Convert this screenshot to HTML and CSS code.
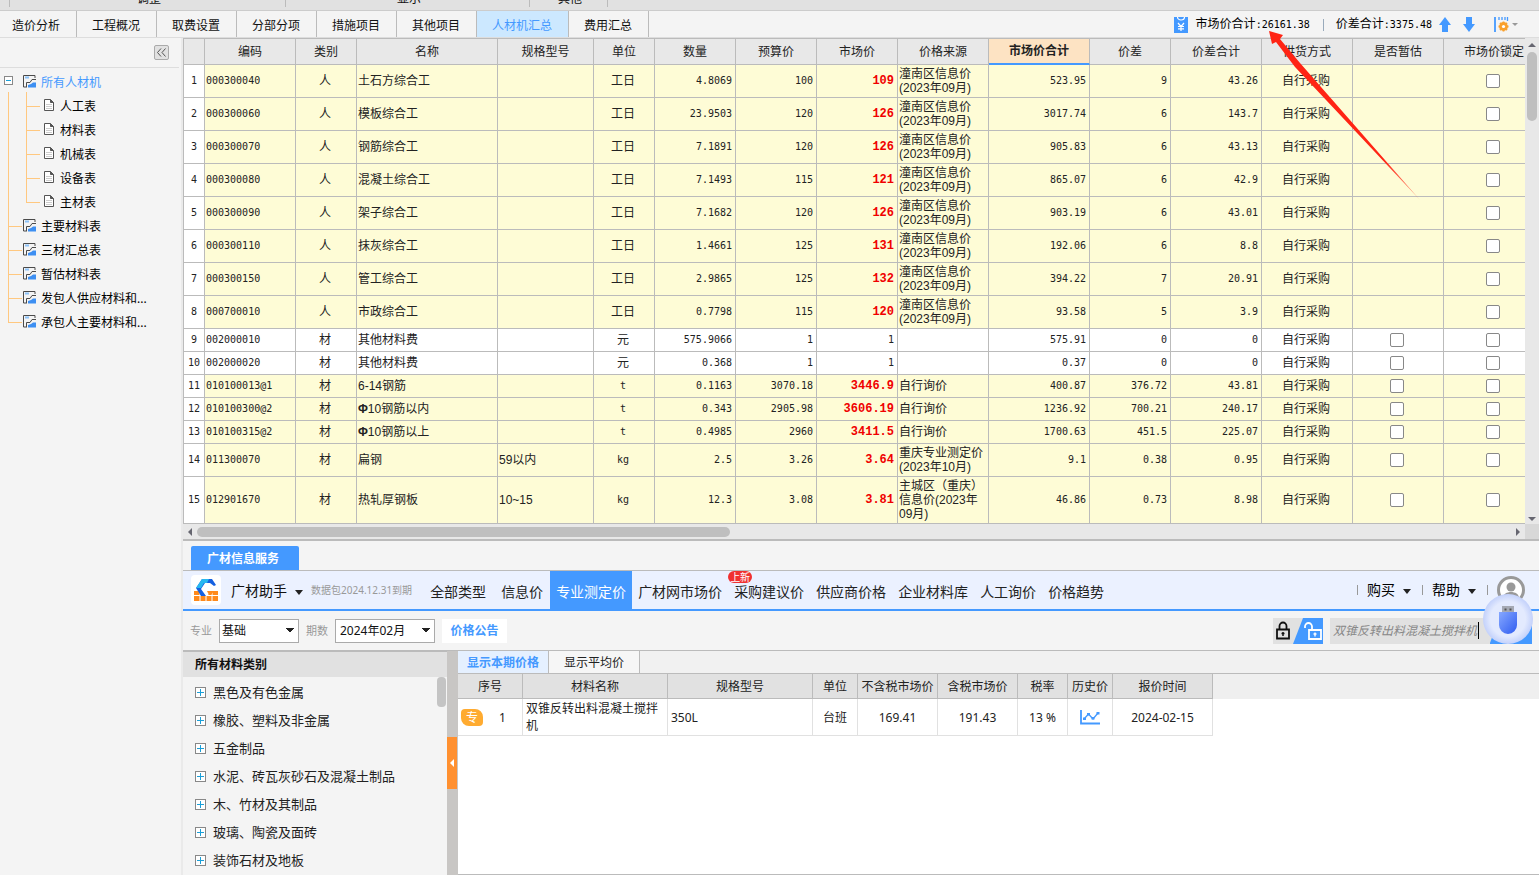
FILE: index.html
```html
<!DOCTYPE html>
<html lang="zh-CN">
<head>
    <meta charset="UTF-8">
    <meta name="viewport" content="width=device-width, initial-scale=1.0">
    <title>人材机汇总</title>
    <link rel="stylesheet" href="styles.css">
</head>
<body>
    <svg class="sprite" aria-hidden="true">
        <symbol id="ico-sheet" viewBox="0 0 13 13">
            <path d="M12 3V.5H.5v11.500H4" fill="none" stroke="#4a4a4a"/>
            <path d="M2 2.500h4" stroke="#8cc2f8" stroke-width="2"/>
            <path d="M3.500 12V7.500H7l2-3h4" fill="none" stroke="#4a4a4a"/>
            <path d="M5 12.500V10l3-1 2-1.500h3v5z" fill="#3d8ff2"/>
        </symbol>
        <symbol id="ico-page" viewBox="0 0 10 12">
            <path d="M.5.5h6l3 3v8h-9z" fill="#fff" stroke="#555"/>
            <path d="M6.500.5v3h3" fill="#555" stroke="#555"/>
            <path d="M2 5.500h6M2 7.500h6M2 9.500h6" stroke="#ccc"/>
        </symbol>
    </svg>

    <div class="ribbon">
        <span class="group group-start"></span>
        <span class="group group-adjust">调整</span>
        <span class="group group-show">显示</span>
        <span class="group group-other">其他</span>
    </div>

    <div class="topbar">
        <nav class="tabs">
            <a href="#">造价分析</a>
            <a href="#">工程概况</a>
            <a href="#">取费设置</a>
            <a href="#">分部分项</a>
            <a href="#">措施项目</a>
            <a href="#">其他项目</a>
            <a href="#" class="active">人材机汇总</a>
            <a href="#">费用汇总</a>
        </nav>
        <div class="summary">
            <svg class="money" width="14" height="16" viewBox="0 0 14 16">
                <path d="M0 0h14v16H0z" fill="#49f"/>
                <path d="M3.500 0a3.500 3 0 0 0 7 0M4 6l3 3.500L10 6M7 9.500V14M4 9.500h6M4 11.800h6" fill="none" stroke="#fff" stroke-width="1.200"/>
            </svg>
            <span>市场价合计<b class="num">:26161.38</b></span>
            <i class="bar"></i>
            <span>价差合计<b class="num">:3375.48</b></span>
            <button class="move" aria-label="上移"><svg width="12" height="16" viewBox="0 0 12 16"><path d="M6 0l6 8H9v7H3V8H0z" fill="#49f"/></svg></button>
            <button class="move" aria-label="下移"><svg width="12" height="16" viewBox="0 0 12 16"><path d="M6 15l6-8H9V0H3v7H0z" fill="#49f"/></svg></button>
            <button class="setting" aria-label="显示设置">
                <svg width="24" height="16" viewBox="0 0 24 16">
                    <path d="M1 0v15" stroke="#49f" stroke-width="1.800"/>
                    <path d="M5 0v3M8 0v3M11 0v3M13.500 0v4" stroke="#49f" stroke-width="1.300"/>
                    <circle cx="9.500" cy="9.500" r="3" fill="none" stroke="#f9a02c" stroke-width="2.800"/>
                    <path d="M9.500 4.500v10M4.500 9.500h10M6 6l7 7M13 6l-7 7" stroke="#f9a02c" stroke-width="1.800"/>
                    <circle cx="9.500" cy="9.500" r="1.600" fill="#fff"/>
                    <path d="M18 6h6l-3 3z" fill="#999"/>
                </svg>
            </button>
        </div>
    </div>

    <div class="main">
        <aside class="sidebar">
            <div class="sidebar-head">
                <button class="collapse" aria-label="收起">
                    <svg width="9" height="9" viewBox="0 0 9 9"><path d="M4 .5l-3.500 4 3.500 4M8.500 .5L5 4.500l3.500 4" fill="none" stroke="#555"/></svg>
                </button>
            </div>
            <ul class="tree">
                <li class="root">
                    <a href="#" class="selected"><i class="toggle"></i><svg class="sheet"><use href="#ico-sheet"/></svg>所有人材机</a>
                    <ul>
                        <li><a href="#"><svg class="page"><use href="#ico-page"/></svg>人工表</a></li>
                        <li><a href="#"><svg class="page"><use href="#ico-page"/></svg>材料表</a></li>
                        <li><a href="#"><svg class="page"><use href="#ico-page"/></svg>机械表</a></li>
                        <li><a href="#"><svg class="page"><use href="#ico-page"/></svg>设备表</a></li>
                        <li><a href="#"><svg class="page"><use href="#ico-page"/></svg>主材表</a></li>
                    </ul>
                </li>
                <li><a href="#"><svg class="sheet"><use href="#ico-sheet"/></svg>主要材料表</a></li>
                <li><a href="#"><svg class="sheet"><use href="#ico-sheet"/></svg>三材汇总表</a></li>
                <li><a href="#"><svg class="sheet"><use href="#ico-sheet"/></svg>暂估材料表</a></li>
                <li><a href="#"><svg class="sheet"><use href="#ico-sheet"/></svg>发包人供应材料和...</a></li>
                <li><a href="#"><svg class="sheet"><use href="#ico-sheet"/></svg>承包人主要材料和...</a></li>
            </ul>
        </aside>

        <div class="content">
            <section class="grid">
                <div class="grid-view">
                    <table class="materials">
                        <colgroup>
                            <col class="w-no"><col class="w-code"><col class="w-type"><col class="w-name"><col class="w-spec"><col class="w-type">
                            <col class="w-num"><col class="w-num"><col class="w-num"><col class="w-mid"><col class="w-total"><col class="w-num">
                            <col class="w-mid"><col class="w-mid"><col class="w-mid"><col>
                        </colgroup>
                        <thead>
                            <tr>
                                <th></th><th>编码</th><th>类别</th><th>名称</th><th>规格型号</th><th>单位</th>
                                <th>数量</th><th>预算价</th><th>市场价</th><th>价格来源</th><th class="current">市场价合计</th><th>价差</th>
                                <th>价差合计</th><th>供货方式</th><th>是否暂估</th><th>市场价锁定</th>
                            </tr>
                        </thead>
                        <tbody id="rows"></tbody>
                    </table>
                </div>
                <div class="scroll-y"><i class="tri up"></i><i class="thumb"></i><i class="tri down"></i></div>
                <div class="scroll-x"><i class="tri left"></i><i class="thumb"></i><i class="tri right"></i></div>
                <div class="corner"></div>
            </section>

            <section class="info">
                <div class="info-tabs"><button>广材信息服务</button></div>

                <header class="helper">
                    <svg class="logo" width="30" height="30" viewBox="0 0 30 30">
                        <rect width="30" height="30" rx="4" fill="#fff"/>
                        <path d="M3 16h6l4 4h4l4-4h6v10H3z" fill="#ff8a1c"/>
                        <path d="M3 20.500h24M9 16.500v4M21 16.500v4M9 21v5M15 20v6M21 21v5" stroke="#fff"/>
                        <path d="M5 13l6-9h10l4 6-2 1-4-3h-5l-4 6 5 7h-5z" fill="#1560e0"/>
                        <path d="M5 13l6-9h7l-2 4h-3l-3 5z" fill="#27b8f0"/>
                        <path d="M16 16h7l-3 4h-2z" fill="#ff8a1c"/>
                    </svg>
                    <button class="brand">广材助手<i class="caret"></i></button>
                    <span class="expire">数据包2024.12.31到期</span>
                    <nav class="helper-nav">
                        <a href="#" class="wide">全部类型</a>
                        <a href="#" class="wide">信息价</a>
                        <a href="#" class="active">专业测定价</a>
                        <a href="#">广材网市场价</a>
                        <a href="#">采购建议价<span class="badge">上新</span></a>
                        <a href="#">供应商价格</a>
                        <a href="#">企业材料库</a>
                        <a href="#">人工询价</a>
                        <a href="#">价格趋势</a>
                    </nav>
                    <div class="account">
                        <button>购买<i class="caret"></i></button>
                        <button>帮助<i class="caret"></i></button>
                        <button class="user" aria-label="账号">
                            <svg width="28" height="28" viewBox="0 0 28 28">
                                <circle cx="14" cy="14" r="12.500" fill="#fff" stroke="#999" stroke-width="3"/>
                                <circle cx="14" cy="11" r="4.500" fill="#999"/>
                                <path d="M6 22c0-8 16-8 16 0z" fill="#999"/>
                            </svg>
                        </button>
                        <button class="usb" aria-label="加密锁">
                            <svg width="52" height="52" viewBox="0 0 52 52">
                                <defs>
                                    <radialGradient id="halo"><stop offset=".7" stop-color="#e3eafe"/><stop offset="1" stop-color="#c3d1fb"/></radialGradient>
                                    <linearGradient id="stick" x2="1" y2="1"><stop offset="0" stop-color="#86a8ff"/><stop offset="1" stop-color="#2f5cf0"/></linearGradient>
                                </defs>
                                <circle cx="26" cy="26" r="25" fill="url(#halo)"/>
                                <path d="M20 13h12v7H20z" fill="#a5a9b4"/>
                                <path d="M22.500 15.500h2v2h-2zM27.500 15.500h2v2h-2z" fill="#555"/>
                                <path d="M17 19h18v13a9 9 0 0 1-18 0z" fill="url(#stick)"/>
                            </svg>
                        </button>
                    </div>
                </header>

                <div class="filters">
                    <label for="major">专业</label>
                    <select id="major" class="major"><option>基础</option></select>
                    <label for="period">期数</label>
                    <select id="period" class="period"><option>2024年02月</option></select>
                    <button class="notice">价格公告</button>
                    <button class="lock" aria-label="锁定">
                        <svg width="50" height="26" viewBox="0 0 50 26">
                            <path d="M0 0h50v26H0z" fill="#e1e1e1"/>
                            <path d="M30 0h20v26H20z" fill="#49f"/>
                            <path d="M4 11.500h12v9H4zM6.500 11V8a3.500 3.500 0 0 1 7 0v3" fill="none" stroke="#111" stroke-width="1.800"/>
                            <path d="M10 14v4M8.500 15.500h3" stroke="#111" stroke-width="1.500"/>
                            <path d="M36 12h12v9H36zM39 12V8.500a3.500 3.500 0 0 0-7 0V10" fill="none" stroke="#fff" stroke-width="1.800"/>
                            <path d="M42 14.500v4M40.500 16h3" stroke="#fff" stroke-width="1.400"/>
                        </svg>
                    </button>
                    <div class="search">
                        <input type="text" aria-label="搜索材料" value="双锥反转出料混凝土搅拌机">
                        <button aria-label="搜索"></button>
                    </div>
                </div>

                <div class="price">
                    <div class="category">
                        <h2>所有材料类别</h2>
                        <div class="category-body">
                            <ul>
                                <li><i class="plus"></i>黑色及有色金属</li>
                                <li><i class="plus"></i>橡胶、塑料及非金属</li>
                                <li><i class="plus"></i>五金制品</li>
                                <li><i class="plus"></i>水泥、砖瓦灰砂石及混凝土制品</li>
                                <li><i class="plus"></i>木、竹材及其制品</li>
                                <li><i class="plus"></i>玻璃、陶瓷及面砖</li>
                                <li><i class="plus"></i>装饰石材及地板</li>
                            </ul>
                            <i class="thumb"></i>
                        </div>
                    </div>
                    <div class="splitter"><button aria-label="收起类别"><i class="tri left"></i></button></div>
                    <div class="quotes">
                        <div class="quote-tabs">
                            <button class="active">显示本期价格</button>
                            <button>显示平均价</button>
                        </div>
                        <div class="quote-view">
                            <table>
                                <colgroup>
                                    <col class="q-no"><col class="q-name"><col class="q-name"><col class="q-unit"><col class="q-price"><col class="q-price">
                                    <col class="q-rate"><col class="q-unit"><col class="q-date">
                                </colgroup>
                                <thead>
                                    <tr><th>序号</th><th>材料名称</th><th>规格型号</th><th>单位</th><th>不含税市场价</th><th>含税市场价</th><th>税率</th><th>历史价</th><th>报价时间</th></tr>
                                </thead>
                                <tbody>
                                    <tr>
                                        <td><div class="seq"><span class="tag">专</span>1</div></td>
                                        <td class="text">双锥反转出料混凝土搅拌机</td>
                                        <td class="text">350L</td>
                                        <td>台班</td>
                                        <td>169.41</td>
                                        <td>191.43</td>
                                        <td>13 %</td>
                                        <td>
                                            <svg width="20" height="15" viewBox="0 0 20 15">
                                                <path d="M1 0v13.500h19" fill="none" stroke="#49f" stroke-width="1.800"/>
                                                <path d="M4 9l4.500-5 4.500 5 5-6" fill="none" stroke="#49f" stroke-width="1.300"/>
                                                <path d="M3 7.500h3v2.500H3zM7 3h3v2.500H7zM11.500 7h3v2.500h-3zM16.500 2h3v2.500h-3z" fill="#49f"/>
                                            </svg>
                                        </td>
                                        <td>2024-02-15</td>
                                    </tr>
                                </tbody>
                            </table>
                        </div>
                    </div>
                </div>
            </section>
        </div>
    </div>

    <!-- red pointer at the market total -->
    <svg class="pointer" width="154" height="172" viewBox="0 0 154 172" aria-hidden="true">
        <defs>
            <linearGradient id="fade" gradientUnits="userSpaceOnUse" x1="115" y1="130" x2="152" y2="171">
                <stop offset="0" stop-color="#ff2414"/><stop offset="1" stop-color="#ff2414" stop-opacity=".4"/>
            </linearGradient>
        </defs>
        <path d="M1 1l14 4-3 4 20 24 120 137L27 37 8 12l-4 2z" fill="url(#fade)"/>
    </svg>

    <script>
        const rowsBody = document.getElementById('rows');
        const local = '潼南区信息价(2023年09月)';

        // 编码, 类别, 名称, 规格型号, 单位, 数量, 预算价, 市场价, 价格来源, 市场价合计, 价差, 价差合计
        const materials = [
            ['000300040', '人', '土石方综合工', '', '工日', '4.8069', '100', '109', local, '523.95', '9', '43.26'],
            ['000300060', '人', '模板综合工', '', '工日', '23.9503', '120', '126', local, '3017.74', '6', '143.7'],
            ['000300070', '人', '钢筋综合工', '', '工日', '7.1891', '120', '126', local, '905.83', '6', '43.13'],
            ['000300080', '人', '混凝土综合工', '', '工日', '7.1493', '115', '121', local, '865.07', '6', '42.9'],
            ['000300090', '人', '架子综合工', '', '工日', '7.1682', '120', '126', local, '903.19', '6', '43.01'],
            ['000300110', '人', '抹灰综合工', '', '工日', '1.4661', '125', '131', local, '192.06', '6', '8.8'],
            ['000300150', '人', '管工综合工', '', '工日', '2.9865', '125', '132', local, '394.22', '7', '20.91'],
            ['000700010', '人', '市政综合工', '', '工日', '0.7798', '115', '120', local, '93.58', '5', '3.9'],
            ['002000010', '材', '其他材料费', '', '元', '575.9066', '1', '1', '', '575.91', '0', '0'],
            ['002000020', '材', '其他材料费', '', '元', '0.368', '1', '1', '', '0.37', '0', '0'],
            ['010100013@1', '材', '6-14钢筋', '', 't', '0.1163', '3070.18', '3446.9', '自行询价', '400.87', '376.72', '43.81'],
            ['010100300@2', '材', '<b>Φ</b>10钢筋以内', '', 't', '0.343', '2905.98', '3606.19', '自行询价', '1236.92', '700.21', '240.17'],
            ['010100315@2', '材', '<b>Φ</b>10钢筋以上', '', 't', '0.4985', '2960', '3411.5', '自行询价', '1700.63', '451.5', '225.07'],
            ['011300070', '材', '扁钢', '59以内', 'kg', '2.5', '3.26', '3.64', '重庆专业测定价(2023年10月)', '9.1', '0.38', '0.95'],
            ['012901670', '材', '热轧厚钢板', '10~15', 'kg', '12.3', '3.08', '3.81', '主城区（重庆）信息价(2023年09月)', '46.86', '0.73', '8.98']
        ];

        const cellClass = ['num', 'mid', 'text', 'text', 'mid', 'num end', 'num end', 'num end', 'text', 'num end', 'num end', 'num end'];

        function checkbox(label) {
            return `<input type="checkbox" aria-label="${label}">`;
        }

        materials.forEach((item, i) => {
            const tr = document.createElement('tr');
            const adjusted = item[6] !== item[7];
            if (adjusted) tr.classList.add('adjusted');
            if (item[8].length > 4) tr.classList.add('tall');

            let html = `<td class="no num">${i + 1}</td>`;
            item.forEach((value, c) => {
                let cls = cellClass[c];
                if (c === 7 && adjusted) cls += ' changed';
                if (c === 4 && value.charCodeAt(0) < 128) cls += ' num';
                html += `<td class="${cls}">${value}</td>`;
            });
            html += '<td class="mid">自行采购</td>';
            html += `<td class="mid">${item[1] === '材' ? checkbox('是否暂估 ' + (i + 1)) : ''}</td>`;
            html += `<td class="mid">${checkbox('市场价锁定 ' + (i + 1))}</td>`;
            tr.innerHTML = html;
            rowsBody.appendChild(tr);
        });
    </script>
</body>
</html>
```

FILE: styles.css
```css
* {
    box-sizing: border-box;
}

body {
    display: flex;
    flex-direction: column;
    position: relative;
    height: 100vh;
    margin: 0;
    overflow: hidden;
    background: #f4f4f4;
    color: #111;
    font-family: "Noto Sans", "Noto Sans CJK SC", sans-serif;
    font-size: 12px;
    line-height: 18px;
}

a {
    color: inherit;
    text-decoration: none;
}

button {
    padding: 0;
    border: none;
    background: none;
    color: inherit;
    font: inherit;
    cursor: pointer;
}

ul {
    margin: 0;
    padding: 0;
    list-style: none;
}

svg {
    display: block;
    flex: none;
}

.sprite {
    position: absolute;
    width: 0;
    height: 0;
}

.num {
    font-family: "DejaVu Sans Mono", monospace;
    font-size: 10px;
    font-weight: normal;
}

/* arrows */
.tri {
    flex: none;
    width: 0;
    height: 0;
    border: 4px solid transparent;
}

.tri.up {
    border-top: none;
    border-bottom-color: #666670;
}

.tri.down {
    border-bottom: none;
    border-top-color: #666670;
}

.tri.left {
    border-left: none;
    border-right-color: #666670;
}

.tri.right {
    border-right: none;
    border-left-color: #666670;
}

.caret {
    display: inline-block;
    margin-left: 8px;
    border: 4px solid transparent;
    border-top: 5px solid #222;
    border-bottom: none;
    vertical-align: middle;
}

/* ribbon bottom edge */
.ribbon {
    display: flex;
    flex: none;
    height: 11px;
    overflow: hidden;
    background: #e1e1e1;
    border-bottom: 1px solid #ccc;
    line-height: 16px;
}

.group {
    display: flex;
    align-items: flex-end;
    justify-content: center;
    height: 7px;
    border-right: 1px solid #bbb;
}

.group-start {
    width: 10px;
}

.group-adjust {
    width: 276px;
    padding-left: 3px;
}

.group-show {
    width: 244px;
    padding-left: 3px;
}

.group-other {
    width: 78px;
    padding-left: 3px;
}

/* top tabs */
.topbar {
    display: flex;
    flex: none;
    justify-content: space-between;
    height: 27px;
    border-bottom: 1px solid #ddd;
}

.tabs {
    display: flex;
}

.tabs a {
    padding: 6px 16px 0 15px;
    border-right: 1px solid #bbb;
}

.tabs a:first-child {
    padding-left: 12px;
}

.tabs a.active {
    background: #cce8ff;
    color: #49f;
}

.summary {
    display: flex;
    align-items: center;
    padding: 1px 21px 0 0;
    color: #000;
}

.summary .money {
    margin-right: 8px;
}

.summary .bar {
    width: 1px;
    height: 12px;
    margin: 0 12px 0 13px;
    background: #9ab;
}

.summary .move {
    margin-left: 7px;
}

.summary .move + .move {
    margin-left: 12px;
}

.summary .setting {
    margin-left: 19px;
}

/* body */
.main {
    display: flex;
    flex: 1;
    min-height: 0;
}

.sidebar {
    flex: none;
    width: 183px;
    border-right: 2px solid #eaeaea;
}

.sidebar-head {
    display: flex;
    align-items: flex-start;
    justify-content: flex-end;
    height: 30px;
    margin-right: 2px;
    padding: 7px 10px 0 0;
    border-bottom: 1px solid #ddd;
}

.collapse {
    display: flex;
    align-items: center;
    justify-content: center;
    width: 15px;
    height: 15px;
    background: #e1e1e1;
    border: 1px solid #aaa;
    border-radius: 2px;
}

.tree {
    padding-top: 2px;
}

.tree li {
    position: relative;
}

.tree a {
    display: flex;
    align-items: center;
    height: 24px;
    padding: 1px 0 0 23px;
    color: #000;
}

.tree ul a {
    padding-left: 44px;
}

.tree a.selected {
    color: #49f;
}

.tree .sheet {
    width: 13px;
    height: 13px;
    margin: 0 5px 3px 0;
}

.tree .page {
    width: 10px;
    height: 12px;
    margin: 0 6px 3px 0;
}

.toggle {
    position: absolute;
    top: 6px;
    left: 4px;
    width: 9px;
    height: 9px;
    background: linear-gradient(#1a9fd8, #1a9fd8) center / 5px 1px no-repeat #fff;
    border: 1px solid #888;
}

/* tree guides */
.tree > li:not(.root)::before,
.tree ul li::before {
    content: "";
    position: absolute;
    top: -12px;
    left: 8px;
    width: 13px;
    height: 24px;
    border: solid #ffc880;
    border-width: 0 0 1px 1px;
}

.tree ul li::before {
    left: 26px;
}

.tree ul li:first-child::before {
    top: -2px;
    height: 14px;
}

.root::after {
    content: "";
    position: absolute;
    top: 22px;
    bottom: 0;
    left: 8px;
    width: 1px;
    background: #ffc880;
}

.content {
    display: flex;
    flex: 1;
    flex-direction: column;
    min-width: 0;
}

/* materials grid */
.grid {
    display: grid;
    flex: none;
    grid-template-columns: minmax(0, 1fr) 14px;
    border-bottom: 2px solid #bbb;
}

.grid-view {
    overflow: hidden;
    background: #fff;
}

.materials {
    width: 100%;
    min-width: 1362px;
    table-layout: fixed;
    border-spacing: 0;
    color: #222;
}

.w-no {
    width: 22px;
}

.w-code,
.w-mid {
    width: 91px;
}

.w-type {
    width: 61px;
}

.w-name {
    width: 141px;
}

.w-spec {
    width: 96px;
}

.w-num {
    width: 81px;
}

.w-total {
    width: 101px;
}

.materials th {
    height: 27px;
    padding: 0;
    background: #e8e8e8;
    border: solid #bbb;
    border-width: 1px 1px 1px 0;
    font-weight: normal;
}

.materials th:first-child,
.materials td.no {
    border-left: 1px solid #bbb;
}

.materials th.current {
    background: #fde3c3;
    border-bottom: 2px solid #49f;
    font-weight: bold;
}

.materials td {
    height: 23px;
    padding: 0 3px 0 1px;
    border: solid #bbb;
    border-width: 0 1px 1px 0;
    line-height: 14px;
}

.materials .tall td {
    height: 33px;
    padding-top: 2px;
    padding-bottom: 2px;
}

.materials .adjusted td {
    background: #fefcd6;
}

.materials td.no,
.materials .adjusted td.no {
    padding: 0;
    background: #fff;
    text-align: center;
}

.materials td.mid {
    text-align: center;
}

.materials td.end {
    text-align: right;
}

.materials td.text {
    font-family: "Liberation Sans", "Noto Sans CJK SC", sans-serif;
}

.materials td.changed {
    color: #f00000;
    font-family: "Liberation Mono", monospace;
    font-size: 12px;
    font-weight: bold;
}

.materials input {
    display: block;
    width: 14px;
    height: 14px;
    margin: 0 auto;
    background: #fff;
    border: 1px solid #888;
    border-radius: 2px;
    appearance: none;
}

.scroll-y,
.scroll-x {
    display: flex;
    align-items: center;
    background: #e8e8e8;
}

.scroll-y {
    flex-direction: column;
    padding: 5px 0 3px;
}

.scroll-y .thumb {
    width: 10px;
    height: 69px;
    margin: 5px 0 auto;
    background: #bfbfbf;
    border-radius: 5px;
}

.scroll-x {
    height: 15px;
    padding: 0 5px;
}

.scroll-x .thumb {
    width: 40%;
    height: 10px;
    margin: 0 auto 0 5px;
    background: #bfbfbf;
    border-radius: 5px;
}

.corner {
    background: #d8d8d8;
}

/* price info panel */
.info {
    display: flex;
    flex: 1;
    flex-direction: column;
    min-height: 0;
}

.info-tabs {
    flex: none;
    height: 30px;
    padding: 5px 8px 0;
    border-bottom: 1px solid #bbb;
}

.info-tabs button {
    width: 108px;
    height: 24px;
    padding: 2px 4px 0 0;
    background: #49f;
    border-radius: 2px 2px 0 0;
    color: #fff;
    font-weight: bold;
}

.helper {
    display: flex;
    flex: none;
    align-items: center;
    height: 40px;
    padding: 0 14px 0 8px;
    background: #ebf1ff;
    border-bottom: 2px solid #49f;
    font-size: 14px;
}

.brand {
    margin: 0 8px 0 10px;
    padding-top: 2px;
}

.expire {
    margin-right: 10px;
    color: #999;
    font-size: 10px;
}

.helper-nav {
    display: flex;
    align-self: stretch;
}

.helper-nav a {
    position: relative;
    padding: 0 6px;
    color: #222;
    line-height: 42px;
}

.helper-nav a.wide {
    padding: 0 7px 0 8px;
}

.helper-nav a.active {
    background: #49f;
    color: #fff;
}

.badge {
    position: absolute;
    top: 0;
    left: 0;
    width: 24px;
    height: 12px;
    background: #f03030;
    border-radius: 6px;
    color: #fff;
    font-size: 10px;
    line-height: 12px;
    text-align: center;
}

.account {
    display: flex;
    align-items: center;
    position: relative;
    margin-left: auto;
    color: #000;
}

.account button:not(.usb)::before {
    content: "";
    display: inline-block;
    width: 1px;
    height: 10px;
    margin-right: 9px;
    background: #999;
}

.account button {
    margin-right: 11px;
}

.account .user {
    display: flex;
    align-items: center;
    margin-right: 0;
}

.account .usb {
    position: absolute;
    top: 17px;
    right: -9px;
    margin: 0;
}

.filters {
    display: flex;
    flex: none;
    align-items: center;
    height: 40px;
    padding: 0 7px;
    border-bottom: 1px solid #bbb;
}

.filters label {
    color: #999;
    font-size: 11px;
}

.filters select {
    height: 24px;
    margin: 0 7px;
    padding: 0 2px;
    background-color: #fff;
    background-image: linear-gradient(to bottom right, #222 50%, transparent 0), linear-gradient(to bottom left, #222 50%, transparent 0);
    background-position: right 4px center, right 8px center;
    background-repeat: no-repeat;
    background-size: 4px 5px;
    border: 1px solid #aaa;
    border-radius: 0;
    color: #111;
    font: inherit;
    appearance: none;
}

.filters .major {
    width: 80px;
}

.filters .period {
    width: 100px;
    padding-left: 4px;
}

.notice {
    width: 65px;
    height: 24px;
    background: #fff;
    color: #49f;
    font-weight: bold;
}

.lock {
    margin-left: auto;
}

.search {
    display: flex;
    align-items: center;
    width: 202px;
    height: 26px;
    margin-left: 7px;
    padding-left: 3px;
    background: #e1e1e1;
}

.search input {
    width: 146px;
    height: 17px;
    padding: 0;
    background: none;
    border: none;
    border-right: 1px solid #000;
    color: #888;
    font: inherit;
    font-style: italic;
}

.search button {
    width: 42px;
    height: 26px;
    margin-left: auto;
    background: linear-gradient(110deg, transparent 8px, #49f 9px);
}

.price {
    display: flex;
    flex: 1;
    min-height: 0;
}

.category {
    display: flex;
    flex: none;
    flex-direction: column;
    width: 264px;
}

.category h2 {
    flex: none;
    height: 26px;
    margin: 0;
    padding-left: 12px;
    background: #e1e1e1;
    border-top: 1px solid #bbb;
    font-size: 12px;
    line-height: 25px;
}

.category-body {
    display: flex;
    flex: 1;
    justify-content: space-between;
    min-height: 0;
    overflow: hidden;
}

.category ul {
    padding-top: 1px;
    font-size: 13px;
}

.category li {
    display: flex;
    align-items: center;
    height: 28px;
    padding-left: 12px;
    color: #222;
}

.plus {
    width: 11px;
    height: 11px;
    margin-right: 7px;
    background: linear-gradient(#1a9fd8, #1a9fd8) center / 7px 1px no-repeat, linear-gradient(#1a9fd8, #1a9fd8) center / 1px 7px no-repeat #fff;
    border: 1px solid #888;
}

.category .thumb {
    width: 9px;
    height: 30px;
    margin-right: 1px;
    background: #c4c4c4;
    border-radius: 4px;
}

.splitter {
    flex: none;
    width: 11px;
    padding-top: 86px;
    background: #c8c6c4;
}

.splitter button {
    display: flex;
    align-items: center;
    justify-content: center;
    width: 10px;
    height: 52px;
    background: #ff9030;
}

.splitter .tri {
    border-right-color: #fff;
}

.quotes {
    flex: 1;
    min-width: 0;
    background: #fff;
    border-bottom: 1px solid #bbb;
}

.quote-tabs {
    display: flex;
    height: 23px;
    background: #f1f1f1;
    border-bottom: 1px solid #bbb;
}

.quote-tabs button {
    width: 91px;
    padding-top: 2px;
    background: #f6f6f6;
    border-right: 1px solid #bbb;
    color: #222;
}

.quote-tabs button.active {
    background: #e5f0ff;
    color: #49f;
    font-weight: bold;
}

.quote-view {
    background: linear-gradient(#efefef 25px, #fff 25px);
}

.quotes table {
    width: 755px;
    table-layout: fixed;
    border-spacing: 0;
    color: #222;
}

.q-no {
    width: 65px;
}

.q-name {
    width: 145px;
}

.q-unit {
    width: 45px;
}

.q-price {
    width: 80px;
}

.q-rate {
    width: 50px;
}

.q-date {
    width: 100px;
}

.quotes th {
    height: 25px;
    padding: 2px 0 0;
    background: #e1e1e1;
    border: solid #bbb;
    border-width: 0 1px 1px 0;
    font-weight: normal;
}

.quotes td {
    height: 37px;
    padding: 0 3px;
    border: solid #e1e1e1;
    border-width: 0 1px 1px 0;
    line-height: 17px;
    text-align: center;
}

.quotes td.text {
    text-align: left;
}

.quotes td svg {
    margin: 0 auto;
}

.seq {
    display: flex;
    align-items: center;
    gap: 16px;
}

.tag {
    width: 22px;
    height: 17px;
    background: #ffab30;
    border-radius: 4px 8px 4px 8px;
    color: #fff;
}

.pointer {
    position: absolute;
    top: 30px;
    right: 117px;
    pointer-events: none;
}
```
